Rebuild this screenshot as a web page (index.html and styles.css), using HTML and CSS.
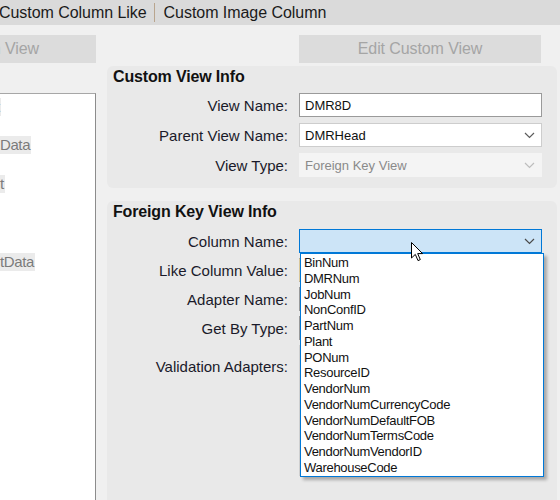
FILE: index.html
```html
<!DOCTYPE html>
<html lang="en">
<head>
  <meta charset="UTF-8"/>
  <title>Custom View Maintenance</title>
  <link rel="stylesheet" href="styles.css">
</head>
<body>
  <div class="tabs">
    <span class="tab tab-first">Custom Column Like</span>
    <span class="tab-sep"></span>
    <span class="tab">Custom Image Column</span>
  </div>

  <div class="workspace">
    <aside class="side">
      <button class="btn btn-side" disabled><span>Add New Custom View</span></button>
      <div class="tree">
        <div class="node"><span class="node-label node-clip">t</span></div>
        <div class="node"></div>
        <div class="node"><span class="node-label">Data</span></div>
        <div class="node"></div>
        <div class="node"><span class="node-label">t</span></div>
        <div class="node"></div>
        <div class="node"></div>
        <div class="node"></div>
        <div class="node"><span class="node-label">tData</span></div>
      </div>
    </aside>

    <main class="main">
      <button class="btn btn-edit" disabled>Edit Custom View</button>

      <section class="group group-view">
        <h2 class="group-title">Custom View Info</h2>
        <div class="form">
          <label class="field-label">View Name:</label>
          <div class="input">DMR8D</div>

          <label class="field-label">Parent View Name:</label>
          <div class="input select">
            <span>DMRHead</span>
            <svg class="chevron" width="11" height="7" viewBox="0 0 11 7"><polyline points="1,1 5.5,5.5 10,1" fill="none" stroke="#5c5c5c" stroke-width="1.2"/></svg>
          </div>

          <label class="field-label">View Type:</label>
          <div class="input select is-disabled">
            <span>Foreign Key View</span>
            <svg class="chevron" width="11" height="7" viewBox="0 0 11 7"><polyline points="1,1 5.5,5.5 10,1" fill="none" stroke="#bdbdbd" stroke-width="1.2"/></svg>
          </div>
        </div>
      </section>

      <section class="group group-fk">
        <h2 class="group-title">Foreign Key View Info</h2>
        <div class="form form-fk">
          <label class="field-label">Column Name:</label>
          <div class="combo">
            <div class="input select is-open">
              <span></span>
              <svg class="chevron" width="11" height="7" viewBox="0 0 11 7"><polyline points="1,1 5.5,5.5 10,1" fill="none" stroke="#4a4a4a" stroke-width="1.2"/></svg>
            </div>
            <ul class="combo-list">
              <li>BinNum</li>
              <li>DMRNum</li>
              <li>JobNum</li>
              <li>NonConfID</li>
              <li>PartNum</li>
              <li>Plant</li>
              <li>PONum</li>
              <li>ResourceID</li>
              <li>VendorNum</li>
              <li>VendorNumCurrencyCode</li>
              <li>VendorNumDefaultFOB</li>
              <li>VendorNumTermsCode</li>
              <li>VendorNumVendorID</li>
              <li>WarehouseCode</li>
            </ul>
          </div>

          <label class="field-label">Like Column Value:</label>
          <div class="input is-required"></div>

          <label class="field-label">Adapter Name:</label>
          <div class="input"></div>

          <label class="field-label">Get By Type:</label>
          <div class="input"></div>

          <label class="field-label field-label-top">Validation Adapters:</label>
          <div class="input listbox"></div>
        </div>
      </section>
    </main>
  </div>

  <svg class="cursor" width="13" height="20" viewBox="0 0 13 20">
    <path d="M0.5,0.5 L0.5,16 L4.3,12.4 L7,18.6 L9.3,17.6 L6.7,11.6 L11.6,11.6 Z" fill="#fff" stroke="#000" stroke-width="1" stroke-linejoin="miter"/>
  </svg>
</body>
</html>
```

FILE: styles.css
```css
/* Reset & Base */
*, *::before, *::after { margin:0; padding:0; box-sizing:border-box; }
body {
  width: 560px;
  height: 500px;
  overflow: hidden;
  position: relative;
  background: #F0F0F0;
  color: #1A1A2A;
  font-family: "Liberation Sans", Arial, sans-serif;
}
ul { list-style: none; }

/* Tabs */
.tabs {
  height: 25px;
  background: #DADADA;
  display: flex;
  align-items: center;
  font-size: 16px;
  letter-spacing: -0.05px;
  white-space: nowrap;
  color: #1A1A1A;
}
.tab-first { margin-left: -1px; }
.tab-sep {
  width: 1px;
  height: 19px;
  background: #B9A58E;
  margin: 0 9px 0 7px;
}

/* Workspace */
.workspace {
  display: flex;
  gap: 11px;
  padding-top: 10px;
  height: 475px;
}
.btn {
  height: 28px;
  background: #DCDCDC;
  border: none;
  color: #A5A5A5;
  font-family: "Liberation Sans", Arial, sans-serif;
  font-size: 16px;
  letter-spacing: -0.1px;
}

/* Side tree */
.side {
  width: 96px;
  flex: none;
  display: flex;
  flex-direction: column;
}
.btn-side {
  display: flex;
  align-items: center;
  justify-content: flex-end;
  padding-right: 57px;
  overflow: hidden;
  white-space: nowrap;
}
.tree {
  margin-top: 30px;
  flex: 1;
  background: #FFFFFF;
  border-top: 1px solid #A7A7A7;
  border-right: 1px solid #8C8C8C;
  padding-top: 3px;
  overflow: hidden;
}
.node {
  height: 19.4px;
  display: flex;
  align-items: center;
  white-space: nowrap;
}
.node-label {
  background: #EBEBEB;
  color: #7B7B7B;
  font-size: 15px;
  letter-spacing: -0.4px;
  line-height: 18px;
  padding-right: 1px;
}
.node-clip { margin-left: -4px; }

/* Main column */
.main {
  width: 450px;
  display: flex;
  flex-direction: column;
}
.btn-edit {
  width: 242px;
  margin-left: 192px;
}
.group {
  background: #E9E9E9;
  border-radius: 6px;
  padding: 2px 14px 0 6px;
}
.group-view {
  margin-top: 3px;
  height: 122px;
}
.group-fk {
  margin-top: 13px;
  flex: 1;
  border-radius: 6px 6px 0 0;
}
.group-title {
  font-size: 16px;
  font-weight: bold;
  letter-spacing: -0.15px;
  line-height: 18px;
  color: #111111;
}

/* Forms */
.form {
  display: grid;
  grid-template-columns: 175px 243px;
  grid-auto-rows: 24px;
  column-gap: 11px;
  row-gap: 6px;
  margin-top: 7px;
}
.form-fk {
  row-gap: 5px;
  margin-top: 8px;
  grid-template-rows: 24px 24px 24px 24px 131px;
}
.field-label {
  display: flex;
  align-items: center;
  justify-content: flex-end;
  font-size: 15px;
  white-space: nowrap;
}
.field-label-top {
  align-items: flex-start;
  padding-top: 13px;
}
.input {
  height: 24px;
  background: #FFFFFF;
  border: 1px solid #9A9A9A;
  padding: 0 6px 0 5px;
  font-size: 13px;
  display: flex;
  align-items: center;
  color: #111111;
}
.select {
  justify-content: space-between;
  border-color: #CDCDCD;
}
.select.is-disabled {
  background: #F4F4F4;
  border-color: #F4F4F4;
  color: #8A8A8A;
}
.select.is-open {
  background: #CCE4F7;
  border-color: #0078D7;
}
.is-required { border-left-color: #D9C79A; }
.listbox {
  height: 131px;
  border-color: #CFCFCF;
}
.chevron { flex: none; }

/* Open dropdown */
.combo { position: relative; }
.combo-list {
  position: absolute;
  top: 24px;
  left: 1px;
  width: 244px;
  height: 224px;
  background: #FFFFFF;
  border: 1px solid #0078D7;
  box-shadow: 3px 3px 3px rgba(0,0,0,0.28);
  padding: 1px 0 0 3px;
  z-index: 2;
}
.combo-list li {
  height: 15.77px;
  line-height: 15.77px;
  font-size: 13px;
  letter-spacing: -0.3px;
  color: #111111;
  white-space: nowrap;
}

/* Mouse pointer */
.cursor {
  position: absolute;
  left: 411px;
  top: 242px;
  z-index: 5;
}
```
